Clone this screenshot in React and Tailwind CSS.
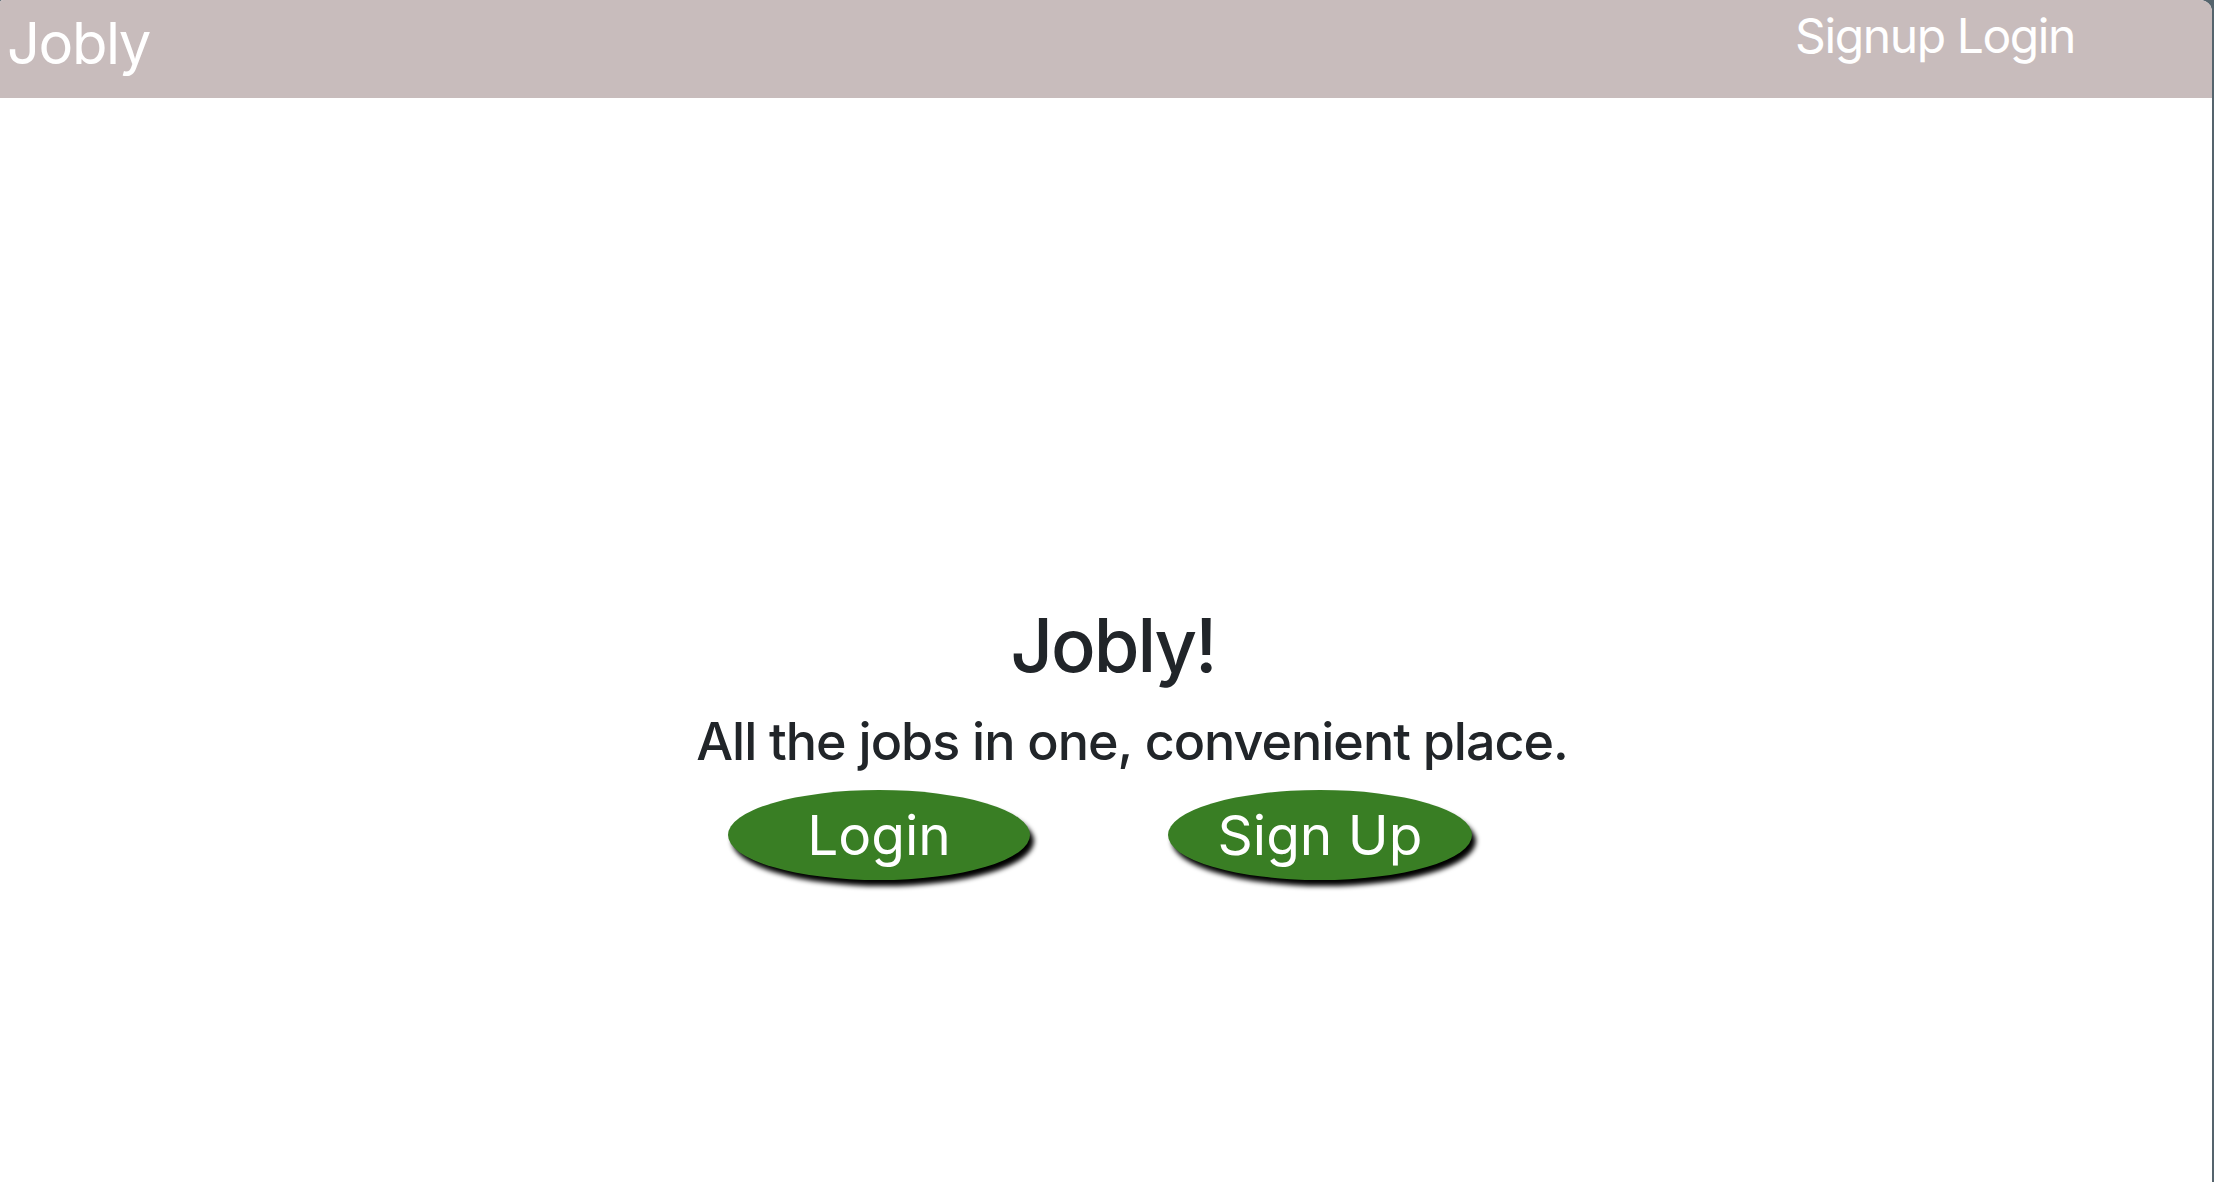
export default function App() {
  return (
    <div className="w-full h-[1182px] bg-[#55646d] overflow-hidden" style={{ fontFamily: "Inter, 'Noto Sans', sans-serif" }}>
      <div className="w-[calc(100%-2px)] h-full bg-white rounded-tr-[12px] rounded-tl-[3px] overflow-hidden">
        <header className="h-[98px] bg-[#c8bcbc] flex justify-between text-white">
          <div className="pl-[7px] pt-[14px] text-[58px] leading-none tracking-[-1.5px]">Jobly</div>
          <nav className="pt-[12px] pr-[137px] text-[48px] leading-none tracking-[-1.4px] flex gap-[12px]">
            <a>Signup</a>
            <a>Login</a>
          </nav>
        </header>
        <main className="flex flex-col items-center text-[#212529]">
          <h1 className="mt-[510px] text-[74px] leading-none font-medium tracking-[-2px] pl-[14px]">Jobly!</h1>
          <p className="mt-[34px] text-[52px] leading-none font-medium tracking-[-1px] pl-[52px]">All the jobs in one, convenient place.</p>
          <div className="mt-[22px] flex gap-[138px] pr-[12px]">
            <button className="w-[302px] h-[90px] rounded-[50%] bg-[#397e24] text-white text-[55px] leading-none flex items-center justify-center shadow-[4px_6px_5px_#000]">Login</button>
            <button className="w-[304px] h-[90px] rounded-[50%] bg-[#397e24] text-white text-[55px] leading-none flex items-center justify-center shadow-[4px_6px_5px_#000]">Sign Up</button>
          </div>
        </main>
      </div>
    </div>
  );
}
